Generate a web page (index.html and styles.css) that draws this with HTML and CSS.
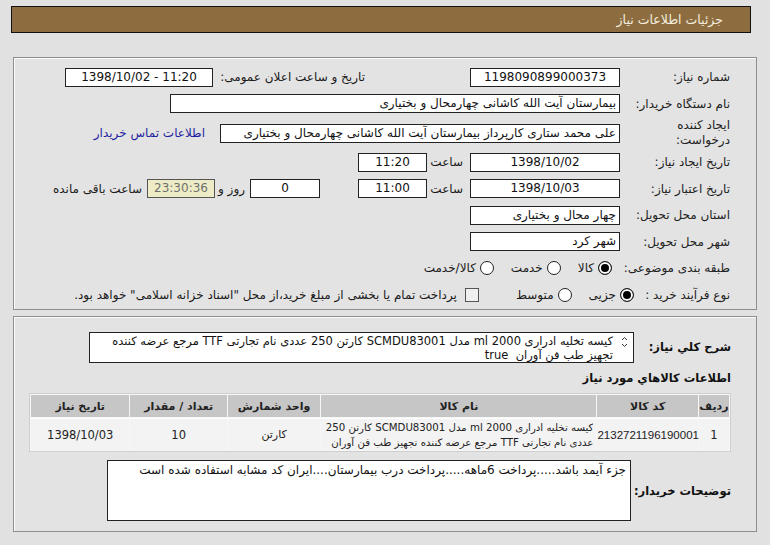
FILE: index.html
```html
<!DOCTYPE html>
<html lang="fa" dir="rtl">
<head>
<meta charset="utf-8">
<title>جزئیات اطلاعات نیاز</title>
<link rel="stylesheet" href="styles.css">
</head>
<body>
<div class="header">جزئیات اطلاعات نیاز</div>

<div class="panel p1">
  <div class="row">
    <div class="lbl">شماره نیاز:</div>
    <div class="box w150 c ltr">1198090899000373</div>
    <div class="lbl-pub">تاریخ و ساعت اعلان عمومی:</div>
    <div class="box w148 c ltr">1398/10/02 - 11:20</div>
  </div>
  <div class="row">
    <div class="lbl">نام دستگاه خریدار:</div>
    <div class="box w450">بیمارستان آیت الله کاشانی چهارمحال و بختیاری</div>
  </div>
  <div class="row tall">
    <div class="lbl two">ایجاد کننده<br>درخواست:</div>
    <div class="box w400">علی محمد ستاری کارپرداز بیمارستان آیت الله کاشانی چهارمحال و بختیاری</div>
    <a class="link" href="#">اطلاعات تماس خریدار</a>
  </div>
  <div class="row">
    <div class="lbl">تاریخ ایجاد نیاز:</div>
    <div class="box w150 c ltr">1398/10/02</div>
    <span class="saat">ساعت</span>
    <div class="box w69 c ltr">11:20</div>
  </div>
  <div class="row">
    <div class="lbl">تاریخ اعتبار نیاز:</div>
    <div class="box w150 c ltr">1398/10/03</div>
    <span class="saat">ساعت</span>
    <div class="box w69 c ltr">11:00</div>
    <div class="box w70 c ltr days">0</div>
    <span class="rooz">روز و</span>
    <div class="box w68 c ltr remain">23:30:36</div>
    <span class="baghi">ساعت باقی مانده</span>
  </div>
  <div class="row">
    <div class="lbl">استان محل تحویل:</div>
    <div class="box w150">چهار محال و بختیاری</div>
  </div>
  <div class="row">
    <div class="lbl">شهر محل تحویل:</div>
    <div class="box w150">شهر کرد</div>
  </div>
  <div class="row">
    <div class="lbl w120">طبقه بندی موضوعی:</div>
    <span class="opt"><span class="radio on"></span>کالا</span>
    <span class="opt"><span class="radio"></span>خدمت</span>
    <span class="opt"><span class="radio"></span>کالا/خدمت</span>
  </div>
  <div class="row">
    <div class="lbl w97">نوع فرآیند خرید :</div>
    <span class="opt"><span class="radio on"></span>جزیی</span>
    <span class="opt"><span class="radio"></span>متوسط</span>
    <span class="opt chk"><span class="checkbox"></span>پرداخت تمام یا بخشی از مبلغ خرید،از محل "اسناد خزانه اسلامی" خواهد بود.</span>
  </div>
</div>

<div class="panel p2">
  <div class="row2">
    <div class="blbl w97">شرح کلي نياز:</div>
    <div class="area">
      <svg class="spin" width="7" height="12" viewBox="0 0 7 12"><path d="M1 4 L3.5 1.5 L6 4" fill="none" stroke="#333" stroke-width="1"/><path d="M1 8 L3.5 10.5 L6 8" fill="none" stroke="#333" stroke-width="1"/></svg>
      <div class="area-text">کیسه تخلیه ادراری 2000 ml مدل SCMDU83001 کارتن 250 عددی نام تجارتی TTF مرجع عرضه کننده<br>تجهیز طب فن آوران&nbsp; true</div>
    </div>
  </div>
  <div class="blbl sec">اطلاعات کالاهاي مورد نياز</div>
  <table class="grid">
    <thead>
      <tr>
        <th class="c1">ردیف</th>
        <th class="c2">کد کالا</th>
        <th class="c3">نام کالا</th>
        <th class="c4">واحد شمارش</th>
        <th class="c5">تعداد / مقدار</th>
        <th class="c6">تاریخ نیاز</th>
      </tr>
    </thead>
    <tbody>
      <tr>
        <td>1</td>
        <td class="ltr code">2132721196190001</td>
        <td class="name"><div>کیسه تخلیه ادراری 2000 ml مدل SCMDU83001 کارتن 250<br>عددی نام تجارتی TTF مرجع عرضه کننده تجهیز طب فن آوران</div></td>
        <td class="unit">کارتن</td>
        <td>10</td>
        <td class="ltr">1398/10/03</td>
      </tr>
    </tbody>
  </table>
  <div class="row3">
    <div class="blbl w100">توضیحات خریدار:</div>
    <div class="notes">جزء آیمد باشد.....پرداخت 6ماهه.....پرداخت درب بیمارستان....ایران کد مشابه استفاده شده است</div>
  </div>
</div>
</body>
</html>
```

FILE: styles.css
```css
html, body {
  margin: 0;
  padding: 0;
}
body {
  background: #e1e1e1;
  font-family: "DejaVu Sans", "Liberation Sans", sans-serif;
  font-size: 12px;
  color: #1a1a1a;
  direction: rtl;
  width: 770px;
  height: 545px;
  overflow: hidden;
}
.header {
  margin: 6px 19px 0 11px;
  height: 25px;
  line-height: 25px;
  background: #8d6d40;
  border: 1px solid #111;
  color: #f4eedf;
  font-size: 12.5px;
  padding-right: 27px;
}
.panel {
  position: relative;
  margin: 0 13px 0 13px;
  border: 1px solid #8e8e8e;
  box-shadow: inset 1px 1px 0 #fbfbfb;
  background: #e3e3e3;
}
.p1 {
  margin-top: 24px;
  height: 253px;
  padding: 6px 26px 0 0;
  box-sizing: border-box;
  overflow: hidden;
}
.p2 {
  margin-top: 6px;
  height: 216px;
  padding: 14px 25px 0 0;
  box-sizing: border-box;
}
.row {
  display: flex;
  align-items: center;
  height: 26.5px;
  white-space: nowrap;
}
.row.tall {
  height: 32px;
}
.lbl {
  width: 110px;
  flex: none;
  color: #222;
}
.lbl.two {
  line-height: 15px;
}
.lbl.w120 { width: 118px; }
.lbl.w97 { width: 96px; }
.box {
  flex: none;
  height: 17px;
  line-height: 17px;
  border: 1px solid #222;
  background: #fff;
  box-sizing: content-box;
  padding: 0 3px;
  overflow: hidden;
  white-space: nowrap;
  color: #111;
}
.c { text-align: center; }
.ltr { direction: ltr; }
.w150 { width: 142px; }
.w148 { width: 140px; }
.w450 { width: 442px; }
.w400 { width: 392px; }
.w69 { width: 61px; }
.w70 { width: 62px; }
.w68 { width: 60px; }
.lbl-pub {
  flex: none;
  width: 146px;
  margin-right: 105px;
  padding-left: 6px;
}
.link {
  margin-right: 15px;
  color: #1f1fa0;
  text-decoration: none;
}
.saat {
  flex: none;
  width: 36px;
  padding-right: 7px;
}
.days {
  margin-right: 38px;
}
.rooz {
  flex: none;
  width: 30px;
  padding-right: 5px;
}
.remain {
  background: #eeecc6;
  border-color: #555;
  color: #707070;
}
.baghi {
  margin-right: 5px;
}
.opt {
  display: flex;
  align-items: center;
  margin-left: 17px;
}
.radio {
  width: 12px;
  height: 12px;
  border-radius: 50%;
  border: 1px solid #222;
  background: #fff;
  margin-left: 4px;
  box-sizing: content-box;
}
.radio.on {
  background: #000;
  box-shadow: inset 0 0 0 2px #fff;
}
.chk {
  margin-right: 20px;
}
.checkbox {
  width: 12px;
  height: 12px;
  border: 1px solid #555;
  background: #efefef;
  margin-left: 8px;
}
.row2 {
  display: flex;
  align-items: center;
  height: 32px;
}
.blbl {
  font-weight: bold;
  font-size: 11.5px;
  color: #111;
  flex: none;
  white-space: nowrap;
}
.blbl.w97 { width: 97px; }
.blbl.w100 { width: 100px; }
.area {
  position: relative;
  width: 545px;
  height: 31px;
  border: 1px solid #222;
  background: #fff;
  box-sizing: border-box;
  padding: 1px 20px 0 4px;
  line-height: 14px;
  overflow: hidden;
}
.spin {
  position: absolute;
  right: 5px;
  top: 3px;
  display: block;
}
.area-text {
  white-space: nowrap;
  color: #111;
  font-size: 11.5px;
}
.sec {
  margin-top: 7px;
  height: 17px;
  line-height: 17px;
}
.grid {
  margin-top: 6px;
  width: 702px;
  border-collapse: separate;
  border-spacing: 1px;
  background: #f6f6f6;
  border: 1px solid #cfcfcf;
  table-layout: fixed;
}
.grid th {
  background: #c6c6c6;
  height: 22px;
  font-weight: bold;
  font-size: 11px;
  color: #222;
  padding: 0;
}
.grid td {
  background: #f3f3f3;
  height: 31px;
  text-align: center;
  padding: 0;
  color: #222;
  border-top: 1px solid #fff;
  font-size: 11.5px;
}
.grid td.code {
  font-family: "Liberation Sans", sans-serif;
  font-size: 11.5px;
}
.c1 { width: 30px; }
.c2 { width: 100px; }
.c3 { width: 274px; }
.c4 { width: 92px; }
.c5 { width: 96px; }
.c6 { width: 98px; }
.grid td.name {
  text-align: right;
  padding: 0 3px 0 1px;
}
.grid td.name div {
  height: 30px;
  line-height: 15px;
  overflow: hidden;
  white-space: nowrap;
  font-size: 10.2px;
}
.grid td.unit {
  font-size: 11px;
}
.row3 {
  display: flex;
  align-items: center;
  margin-top: 8px;
}
.notes {
  width: 524px;
  height: 61px;
  box-sizing: border-box;
  border: 1px solid #222;
  background: #fff;
  padding: 2px 4px;
  line-height: 15px;
  color: #111;
}
```
